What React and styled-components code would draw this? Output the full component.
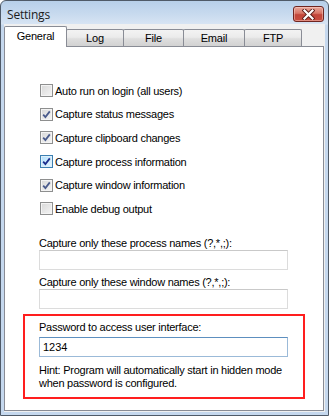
import React from 'react'
import styled, { createGlobalStyle } from 'styled-components'

const GlobalStyle = createGlobalStyle`
  html, body {
    margin: 0;
    padding: 0;
    background: #ffffff;
  }
  body {
    font-family: 'Liberation Sans', Arial, sans-serif;
    font-size: 11px;
    color: #000;
  }
`

const Window = styled.div`
  width: 329px;
  height: 416px;
  box-sizing: border-box;
  border: 1px solid #4f5a68;
  border-radius: 6px 6px 0 0;
  background: linear-gradient(#b7cfe9 0px, #c9dbef 14px, #d7e4f3 23px, #c5d8ee 24px, #c5d8ee 100%);
  display: flex;
  flex-direction: column;
  padding: 0 3px 3px 3px;
  overflow: hidden;
`

const TitleBar = styled.div`
  height: 23px;
  display: flex;
  align-items: flex-start;
  justify-content: space-between;
  padding: 4px 1px 0 3px;
  box-sizing: border-box;
`

const Title = styled.span`
  font-family: 'Open Sans', 'Noto Sans', sans-serif;
  font-size: 12px;
  line-height: 16px;
  padding-top: 2px;
  color: #1b1b1b;
  letter-spacing: -0.2px;
`

const CloseButton = styled.div`
  width: 31px;
  height: 16px;
  box-sizing: border-box;
  border: 1px solid #6f2520;
  border-radius: 3px;
  background: linear-gradient(#e8a89d 0%, #d87565 45%, #c2463a 55%, #c94d3e 100%);
  box-shadow: inset 0 0 0 1px rgba(255, 220, 210, 0.45);
  display: flex;
  align-items: center;
  justify-content: center;
  margin-top: 1px;
`

const Client = styled.div`
  flex: 1;
  background: #f0f0f0;
  display: flex;
  flex-direction: column;
  padding: 1px 1px 1px 0;
`

const TabStrip = styled.div`
  display: flex;
  align-items: flex-end;
  height: 21px;
  position: relative;
  z-index: 1;
`

const Tab = styled.div`
  width: ${p => p.$w}px;
  box-sizing: border-box;
  height: ${p => (p.$active ? 21 : 17)}px;
  margin-left: ${p => (p.$first ? 0 : -1)}px;
  margin-bottom: ${p => (p.$active ? -1 : 0)}px;
  border: 1px solid #898c95;
  border-bottom: 0;
  border-radius: 2px 2px 0 0;
  background: ${p =>
    p.$active
      ? '#ffffff'
      : 'linear-gradient(#f3f3f3 0%, #ebebeb 45%, #dedede 55%, #d2d2d2 100%)'};
  display: flex;
  align-items: center;
  justify-content: center;
  padding-bottom: ${p => (p.$active ? 3 : 0)}px;
  letter-spacing: -0.2px;
  ${p => p.$active && 'z-index: 2;'}
`

const Panel = styled.div`
  flex: 1;
  background: #ffffff;
  border: 1px solid #898c95;
  box-sizing: border-box;
  width: 320px;
  display: flex;
  flex-direction: column;
  padding: 32px 0 0 34px;
`

const CheckList = styled.div`
  display: flex;
  flex-direction: column;
  margin-left: 1px;
`

const CheckRow = styled.label`
  height: 23.6px;
  display: flex;
  align-items: center;
  gap: 2px;
  letter-spacing: -0.25px;
`

const Box = styled.span`
  width: 13px;
  height: 13px;
  box-sizing: border-box;
  border: 1px solid ${p => (p.$hot ? '#3c7fb1' : '#8e8f8f')};
  background: ${p =>
    p.$hot
      ? 'linear-gradient(135deg, #b1dffd 0%, #e9f7fe 100%)'
      : 'linear-gradient(135deg, #d8d8d8 0%, #f5f5f5 100%)'};
  box-shadow: inset 0 0 0 1px ${p => (p.$hot ? '#deeffa' : '#f4f4f4')};
  display: flex;
  align-items: center;
  justify-content: center;
  flex-shrink: 0;
`

const Field = styled.div`
  display: flex;
  flex-direction: column;
  width: 249px;
  margin-top: ${p => p.$top}px;
`

const Label = styled.div`
  line-height: 13px;
  letter-spacing: -0.25px;
`

const TextBox = styled.div`
  width: 249px;
  height: 20px;
  box-sizing: border-box;
  border: 1px solid ${p => (p.$focused ? '#9bbad8' : '#dcdcdc')};
  border-top-color: ${p => (p.$focused ? '#5d8fbf' : '#c9c9c9')};
  background: #fff;
  margin-top: ${p => p.$gap || 0}px;
  padding: 0 3px;
  display: flex;
  align-items: center;
  font-size: 11px;
`

const HintBox = styled.div`
  margin: 5px 0 0 -16px;
  width: 282px;
  height: 85px;
  box-sizing: border-box;
  border: 2px solid #ff1e1e;
  padding: 5px 0 0 14px;
  display: flex;
  flex-direction: column;
`

const Hint = styled.div`
  margin-top: 7px;
  line-height: 13.7px;
  letter-spacing: -0.25px;
`

function CheckMark({ hot }) {
  return (
    <svg width="9" height="9" viewBox="0 0 9 9">
      <path d="M1.2 4.6 L3.4 7 L7.8 1.4" fill="none" stroke={hot ? '#1c2d8c' : '#4a5b8c'} strokeWidth="1.8" />
    </svg>
  )
}

const tabs = [
  { name: 'General', w: 63 },
  { name: 'Log', w: 58 },
  { name: 'File', w: 61 },
  { name: 'Email', w: 62 },
  { name: 'FTP', w: 58 },
]

const options = [
  { text: 'Auto run on login (all users)', checked: false },
  { text: 'Capture status messages', checked: true },
  { text: 'Capture clipboard changes', checked: true },
  { text: 'Capture process information', checked: true, hot: true },
  { text: 'Capture window information', checked: true },
  { text: 'Enable debug output', checked: false },
]

export default function App() {
  return (
    <>
      <GlobalStyle />
      <Window>
        <TitleBar>
          <Title>Settings</Title>
          <CloseButton>
            <svg width="13" height="11" viewBox="0 0 13 11">
              <path d="M2.5 1.5 L10.5 9.5 M10.5 1.5 L2.5 9.5" stroke="#5a1c18" strokeWidth="4" strokeLinecap="square" />
              <path d="M2.5 1.5 L10.5 9.5 M10.5 1.5 L2.5 9.5" stroke="#ffffff" strokeWidth="2.2" strokeLinecap="square" />
            </svg>
          </CloseButton>
        </TitleBar>
        <Client>
          <TabStrip>
            {tabs.map((t, i) => (
              <Tab key={t.name} $w={t.w} $first={i === 0} $active={i === 0}>
                {t.name}
              </Tab>
            ))}
          </TabStrip>
          <Panel>
            <CheckList>
              {options.map(o => (
                <CheckRow key={o.text}>
                  <Box $hot={o.hot}>{o.checked && <CheckMark hot={o.hot} />}</Box>
                  {o.text}
                </CheckRow>
              ))}
            </CheckList>
            <Field $top={16}>
              <Label>Capture only these process names (?,*,;):</Label>
              <TextBox />
            </Field>
            <Field $top={6}>
              <Label>Capture only these window names (?,*,;):</Label>
              <TextBox />
            </Field>
            <HintBox>
              <Label>Password to access user interface:</Label>
              <TextBox $focused $gap={3}>1234</TextBox>
              <Hint>
                Hint: Program will automatically start in hidden mode
                <br />
                when password is configured.
              </Hint>
            </HintBox>
          </Panel>
        </Client>
      </Window>
    </>
  )
}
